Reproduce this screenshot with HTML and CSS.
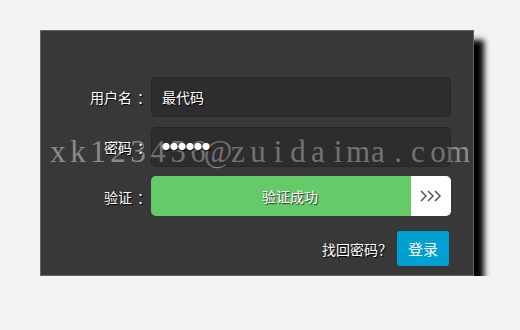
FILE: index.html
```html
<!DOCTYPE html>
<html lang="zh-CN">
<head>
<meta charset="UTF-8">
<title>登录</title>
<link rel="stylesheet" href="styles.css">
</head>
<body>
<div class="login-box">
    <div class="form-row">
        <label class="form-label">用户名<span class="colon">：</span></label>
        <div class="form-input">最代码</div>
    </div>
    <div class="form-row">
        <label class="form-label">密码<span class="colon">：</span></label>
        <div class="form-input password">&#9679;&#9679;&#9679;&#9679;&#9679;&#9679;</div>
    </div>
    <div class="form-row">
        <label class="form-label">验证<span class="colon">：</span></label>
        <div class="slider">
            <div class="slider-bg">验证成功</div>
            <div class="slider-handle">
                <svg width="22" height="14" viewBox="0 0 22 14">
                    <polyline points="1,2 6,7 1,12" fill="none" stroke="#555" stroke-width="1.5"/>
                    <polyline points="8,2 13,7 8,12" fill="none" stroke="#555" stroke-width="1.5"/>
                    <polyline points="15,2 20,7 15,12" fill="none" stroke="#555" stroke-width="1.5"/>
                </svg>
            </div>
        </div>
    </div>
    <div class="form-actions">
        <a class="forgot">找回密码？</a>
        <button class="login-btn">登录</button>
    </div>
    <div class="watermark"><span>x</span><span>k</span><span>1</span><span>2</span><span>3</span><span>4</span><span>5</span><span>6</span><span>@</span><span>z</span><span>u</span><span>i</span><span>d</span><span>a</span><span>i</span><span>m</span><span>a</span><span>.</span><span>c</span><span>o</span><span>m</span></div>
</div>
</body>
</html>
```

FILE: styles.css
```css
body {
    margin: 0;
    padding: 30px 0 0 40px;
    background-color: #f3f3f3;
    font-family: "Noto Sans CJK SC", "Liberation Sans", sans-serif;
}
.login-box {
    position: relative;
    z-index: 0;
    width: 432px;
    height: 244px;
    background-color: #383838;
    border: 1px solid #646464;
    box-shadow: 10px 10px 6px #000;
}
.form-row {
    display: flex;
    align-items: center;
    margin-top: 10px;
}
.form-row:first-child {
    margin-top: 46px;
}
.form-label {
    width: 105px;
    text-align: right;
    padding-right: 5px;
    color: #fff;
    font-size: 14px;
    text-shadow: 1px 1px 1px #000;
}
.colon {
    margin-left: 5px;
    margin-right: -5px;
}
.form-input {
    width: 300px;
    height: 40px;
    box-sizing: border-box;
    padding-left: 10px;
    line-height: 38px;
    background-color: rgba(0, 0, 0, 0.18);
    border: 1px solid rgba(0, 0, 0, 0.16);
    border-radius: 5px;
    color: #fff;
    font-size: 14px;
    text-shadow: 1px 1px 1px #000;
}
.form-input.password {
    font-size: 8px;
}
.slider {
    display: flex;
    width: 300px;
    height: 40px;
    border-radius: 5px;
    overflow: hidden;
    margin-top: -1px;
}
.slider-bg {
    flex: 1;
    padding-left: 18px;
    background-color: #65cb69;
    color: #fff;
    font-size: 14px;
    line-height: 40px;
    text-align: center;
    text-shadow: 1px 1px 1px #333;
}
.slider-handle {
    width: 40px;
    background-color: #fff;
    display: flex;
    align-items: center;
    justify-content: center;
}
.form-actions {
    display: flex;
    justify-content: flex-end;
    align-items: center;
    margin-top: 15px;
    padding-right: 24px;
}
.forgot {
    color: #fff;
    font-size: 14px;
    margin-right: 5px;
    text-shadow: 1px 1px 1px #000;
}
.login-btn {
    width: 52px;
    height: 35px;
    border: none;
    border-radius: 3px;
    background-color: #00a0d3;
    color: #fff;
    font-family: "Noto Sans CJK SC", sans-serif;
    font-size: 15px;
    padding: 0;
}
/* watermark sits under the form text; serif glyphs in fixed cells */
.watermark {
    position: absolute;
    z-index: -1;
    left: 7px;
    top: 103px;
    display: flex;
    font-family: "Liberation Serif", serif;
    font-size: 31px;
    color: #8b8b8b;
    white-space: nowrap;
    pointer-events: none;
}
.watermark span {
    width: 20px;
    display: flex;
    justify-content: center;
}
```
